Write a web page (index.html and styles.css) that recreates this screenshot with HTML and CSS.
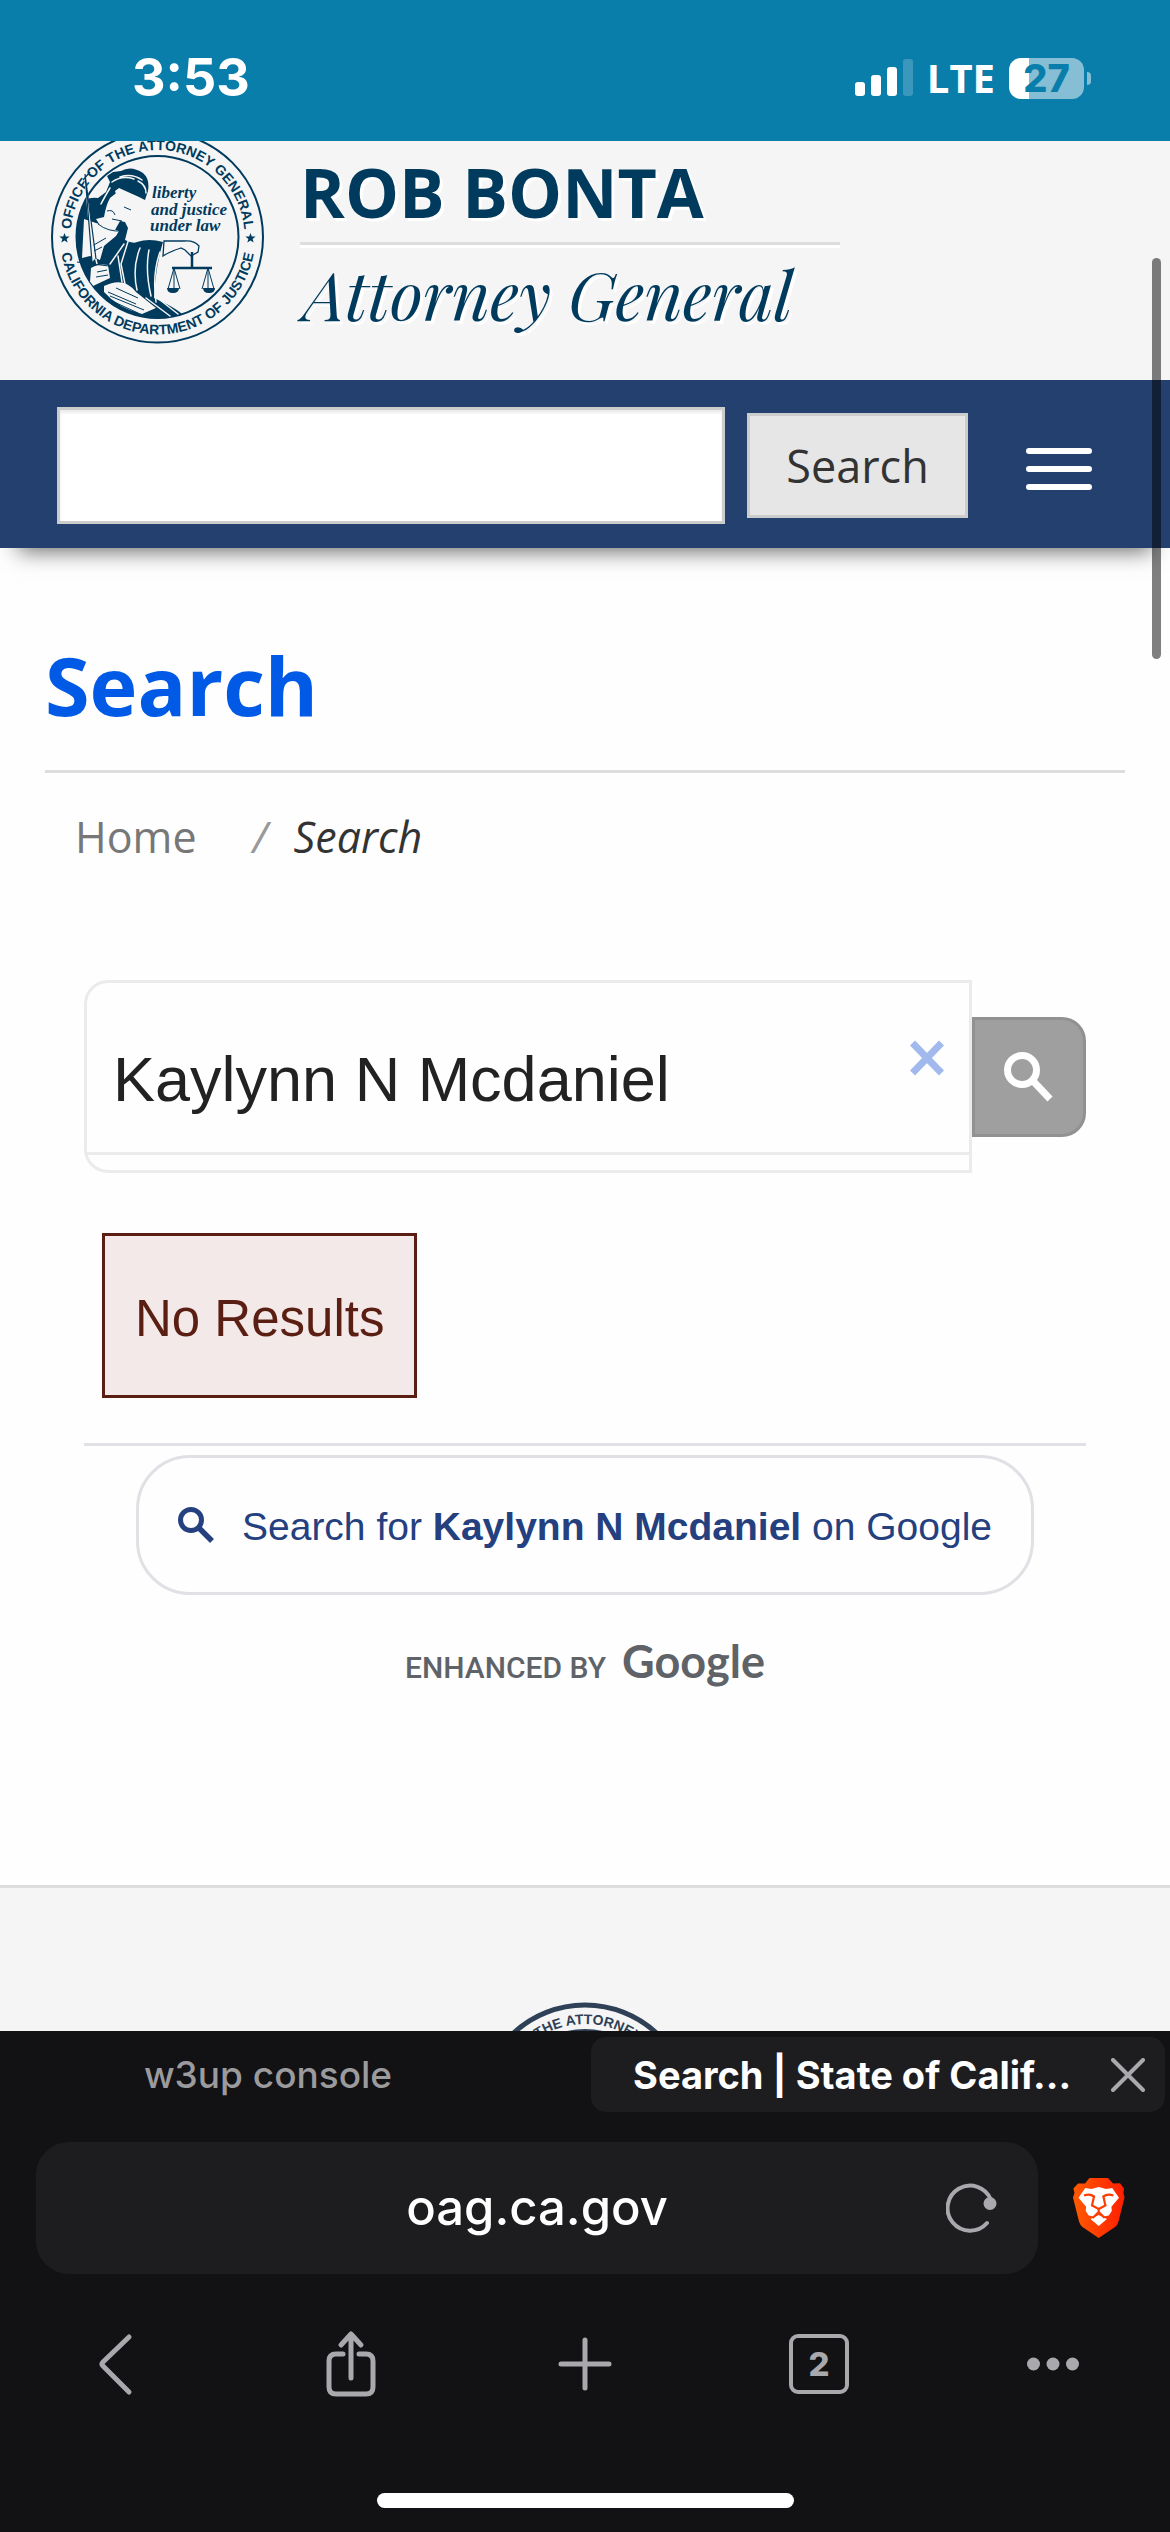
FILE: index.html
```html
<!DOCTYPE html>
<html lang="en">
<head>
<meta charset="utf-8">
<meta name="viewport" content="width=device-width, initial-scale=1">
<title>Search | State of California</title>
<link rel="stylesheet" href="styles.css">
</head>
<body>
<div class="screen">
  <div class="status">
    <span class="clock">3:53</span>
    <div class="status-right">
      <svg class="signal" width="58" height="38" viewBox="0 0 58 38" fill="#fff" aria-hidden="true">
        <rect x="0" y="23" width="10" height="14" rx="3"/>
        <rect x="16" y="16" width="10" height="21" rx="3"/>
        <rect x="32" y="8" width="10" height="29" rx="3"/>
        <rect x="48" y="0" width="10" height="37" rx="3" opacity=".2"/>
      </svg>
      <span class="carrier">LTE</span>
      <div class="battery"><span class="battery-level">27</span><span class="battery-tip"></span></div>
    </div>
  </div>

  <header class="banner">
    <svg class="seal" width="216" height="204" viewBox="50 141 216 204" role="img" aria-label="Office of the Attorney General seal">
      <defs>
        <path id="arcTop" d="M70.500 237 A87 87 0 0 1 244.500 237"/>
        <path id="arcBottom" d="M60 237 A97.500 97.500 0 0 0 255 237"/>
        <clipPath id="disc"><circle cx="157.500" cy="237" r="81"/></clipPath>
      </defs>
      <g fill="none" stroke="#003a5d">
        <circle cx="157.500" cy="237" r="105.500" stroke-width="2"/>
        <circle cx="157.500" cy="237" r="81" stroke-width="2"/>
      </g>
      <g class="seal-ring" fill="#003a5d" text-anchor="middle">
        <text><textPath href="#arcTop" startOffset="50%">OFFICE OF THE ATTORNEY GENERAL</textPath></text>
        <text><textPath href="#arcBottom" startOffset="50%">CALIFORNIA DEPARTMENT OF JUSTICE</textPath></text>
      </g>
      <g fill="#003a5d">
        <path id="star" d="M64.500 233l1.300 3.600h3.800l-3 2.300 1.100 3.700-3.200-2.200-3.200 2.200 1.100-3.700-3-2.300h3.800z"/>
        <use href="#star" x="186"/>
      </g>
      <g class="seal-motto" fill="#003a5d">
        <text x="152" y="198">liberty</text>
        <text x="151" y="215">and justice</text>
        <text x="150" y="231">under law</text>
      </g>
      <g clip-path="url(#disc)">
        <path fill="#003a5d" d="M78 206q8-10 20-8l8-6 4-10-3-6 6-4 8-1q10-6 22 2 7 6 5 18l-3 9-6-3-20-9-4 3 3 9 8 8 4 6-6 6 4 8-3 12q8 4 12 2 12-4 26 0-6 20-8 42l-1 14q22 10 28 16l6 10-50 6-60-30-24-50z"/>
        <path fill="#f5f5f5" d="M120 190l18 9 5 2-2 8-5 2-2 8-9 3-5-1-5 9-13-3q-4-4-6-8l8-2q2-12 6-19z"/>
        <path fill="#f5f5f5" d="M84 219l15 5 20 7-3 5-12 10-4 14-10-4-8 2zM91 268q8-5 17-3l2 13-17 8-3-4zM104 286q20-10 32 6l20 16-14 6q-24-6-38-22z"/>
        <g fill="none" stroke="#f5f5f5" stroke-width="1.500" stroke-linecap="round">
          <path d="M112 182q10-7 22-3M110 188q-6 10-9 16M138 181q8 4 8 12M120 177q12-4 22 3M131 232l-10 32 6 30M140 248q-8 20-3 42M149 250q-4 20 2 46M160 252q-8 22-4 50M124 244l-14 20M166 252q-8 26-8 40M118 256l4 26M160 300l18 14M146 298l24 18M101 234v18M89 230l8 34"/>
        </g>
        <g fill="none" stroke="#003a5d" stroke-width="1">
          <path d="M108 292l28 12M110 296l34 14M112 301l26 12M116 288l22 10M97 272l10-2M96 277l12-2M98 224q10 8 24 7M104 204q-8 6-3 12M107 211q6-2 8 4M124 207l7 3M112 219l10 2M92 246l14-8M94 251l8-4"/>
        </g>
      </g>
      <g fill="none" stroke="#003a5d">
        <path fill="#f5f5f5" stroke="none" d="M84 175l2-1 9 85-3 3z"/>
        <path stroke-width="1.200" d="M85 174l11 85M85 174l7 88M77 262l32 4M83 180l7-8"/>
        <path stroke-width="1.300" fill="#f5f5f5" d="M164 241h20q10-1 15 5l-1 6-7 4-6-6-4-2q-12 4-18 8z"/>
        <path stroke-width="2.500" d="M172 268h40M192 252v15"/>
        <path stroke-width="1" d="M174 268l-6 21M174 268l6 21M174 268v21M208 268l-6 21M208 268l6 21M208 268v21"/>
        <path stroke="none" fill="#003a5d" d="M167 288h12q0 5-6 5t-6-5zM203 288h12q0 5-6 5t-6-5z"/>
      </g>
    </svg>
    <div class="titles">
      <div class="ag-name">ROB BONTA</div>
      <div class="ag-role">Attorney General</div>
    </div>
  </header>

  <nav class="nav">
    <input class="nav-input" type="text" aria-label="Search this site">
    <button class="nav-search" type="button">Search</button>
    <button class="menu" type="button" aria-label="Menu"><span></span><span></span><span></span></button>
  </nav>

  <main class="main">
    <h1 class="title">Search</h1>
    <div class="crumbs">
      <a class="crumb" href="#">Home</a><span class="slash">/</span><em class="here">Search</em>
    </div>

    <section class="results">
      <form class="finder">
        <div class="finder-box">
          <div class="finder-row">
            <input class="finder-input" type="text" value="Kaylynn N Mcdaniel" aria-label="Search terms">
            <button class="clear" type="button" aria-label="Clear">
              <svg width="34" height="36" viewBox="0 0 34 36" stroke="#a1b9ed" stroke-width="7"><path d="M2.500 3l29 30M31.500 3l-29 30"/></svg>
            </button>
          </div>
        </div>
        <button class="go" type="button" aria-label="Search">
          <svg width="50" height="50" viewBox="0 0 50 50" fill="none" stroke="#fff"><circle cx="18" cy="18" r="14.500" stroke-width="7"/><path stroke-width="7" d="M30 30l16 17"/></svg>
        </button>
      </form>
      <div class="none">No Results</div>
      <div class="more">
        <a class="pill" href="#">
          <svg width="36" height="36" viewBox="0 0 36 36" fill="none" stroke="#24407f"><circle cx="13" cy="13" r="10.500" stroke-width="5"/><path stroke-width="5.500" d="M21 21l13 13"/></svg>
          <span class="pill-text">Search for <b>Kaylynn N Mcdaniel</b> on Google</span>
        </a>
        <div class="enhanced"><span>ENHANCED BY</span><span class="google">Google</span></div>
      </div>
    </section>
  </main>

  <footer class="footer">
    <svg class="foot-seal" width="216" height="29" viewBox="0 0 216 29" role="img" aria-label="Attorney General seal">
      <defs><path id="arcFoot" d="M22 108 A86 86 0 0 1 194 108"/></defs>
      <g fill="none" stroke="#2e4157">
        <circle cx="108" cy="108" r="105" stroke-width="5"/>
        <circle cx="108" cy="108" r="79" stroke-width="4"/>
      </g>
      <text class="seal-ring" fill="#2e4157" text-anchor="middle"><textPath href="#arcFoot" startOffset="50%">OFFICE OF THE ATTORNEY GENERAL</textPath></text>
    </svg>
  </footer>

  <div class="chrome">
    <div class="tabs">
      <button class="tab tab-off" type="button">w3up console</button>
      <div class="tab tab-on">
        <span class="tab-name">Search | State of Calif...</span>
        <button class="tab-close" type="button" aria-label="Close tab">
          <svg width="34" height="34" viewBox="0 0 34 34" stroke="#a9a8ad" stroke-width="4" stroke-linecap="round"><path d="M2 2l30 30M32 2L2 32"/></svg>
        </button>
      </div>
    </div>
    <div class="address">
      <div class="url">
        <span class="url-text">oag.ca.gov</span>
        <button class="icon-btn reload" type="button" aria-label="Reload">
          <svg width="52" height="50" viewBox="0 0 52 50" fill="none" stroke="#a9a8ad" stroke-width="4" stroke-linecap="round"><path d="M41 40A22.500 22.500 0 1 1 45 17"/><circle cx="44" cy="20.500" r="6.500" fill="#a9a8ad" stroke="none"/></svg>
        </button>
      </div>
      <button class="icon-btn" type="button" aria-label="Brave Shields">
        <svg width="52" height="60" viewBox="0 0 52 60">
          <defs><linearGradient id="brave"><stop offset="0" stop-color="#ff5a00"/><stop offset="1" stop-color="#ff1f00"/></linearGradient></defs>
          <path fill="url(#brave)" d="M16.400 0H35l5 5.500 7-.2 4 5.200-.6 4.500 1.100 4.500-6 24q-.8 3.500-3.500 5.500L25.700 60 9.500 49Q7 47 6 43.500L0 19.500 1.500 15 .4 10.500l4.600-5 7 0z"/>
          <path fill="#fff" d="M12.300 10l6 1 7.400-2 7.400 2 6.100-1L46 19.700l-7.600 9 .4 4.300-3 4.500-5 1-5.100-3.500-5 3.500-5-1-3-4.500.4-4.300L5.500 19.700zM17.500 41l8.200-4 8.300 4-8.300 7z"/>
          <path fill="none" stroke="#ff3c00" stroke-width="2.200" d="M11 17.500q6-2 10 1l-2 9 6.700 3.500 6.700-3.500-2-9q4-3 10-1M25.700 31v3l-6 6M25.700 34l6 6"/>
        </svg>
      </button>
    </div>
    <div class="tools">
      <button class="icon-btn" type="button" aria-label="Back"><svg width="68" height="68" viewBox="0 0 68 68"><path d="M46 7L20 32q-2 2 0 4l26 26"/></svg></button>
      <button class="icon-btn" type="button" aria-label="Share"><svg width="68" height="68" viewBox="0 0 68 68"><path d="M26 24h-7q-7 0-7 7v26q0 7 7 7h30q7 0 7-7V31q0-7-7-7h-7M34 48V5M24 15L34 4l10 11"/></svg></button>
      <button class="icon-btn" type="button" aria-label="New tab"><svg width="68" height="68" viewBox="0 0 68 68"><path d="M34 10v48M10 34h48"/></svg></button>
      <button class="icon-btn" type="button" aria-label="Tabs"><span class="count">2</span></button>
      <button class="icon-btn" type="button" aria-label="More"><svg class="dots" width="68" height="68" viewBox="0 0 68 68"><circle cx="14.500" cy="34" r="6.500"/><circle cx="34" cy="34" r="6.500"/><circle cx="53.500" cy="34" r="6.500"/></svg></button>
    </div>
    <div class="home-bar"></div>
  </div>
  <div class="scroll-thumb"></div>
</div>
</body>
</html>
```
FILE: styles.css
```css
* { box-sizing: border-box; }
body { margin: 0; background: #fff; font-family: "Open Sans", "Noto Sans", sans-serif; }
button { border: 0; padding: 0; background: none; font: inherit; color: inherit; }
svg { display: block; }
.screen { position: relative; display: flex; flex-direction: column; min-height: 100vh; background: #fefefe; }

.status { display: flex; justify-content: space-between; align-items: center; padding: 48px 86px 33px 132px; background: #0a7eab; color: #fff; font-family: Inter, sans-serif; }
.clock { font-size: 52px; line-height: 60px; font-weight: 700; }
.status-right { display: flex; align-items: center; gap: 14px; }
.carrier { font-family: "Open Sans", sans-serif; font-weight: 700; font-size: 40px; line-height: 60px; }
.battery { position: relative; width: 75px; height: 41px; border-radius: 12px; background: linear-gradient(90deg, #fff 20px, #85bed5 20px); }
.battery-level { display: block; text-align: center; font-size: 38px; line-height: 41px; font-weight: 800; color: #0a7eab; }
.battery-tip { position: absolute; right: -7px; top: 14px; width: 4px; height: 13px; border-radius: 0 6px 6px 0; background: #85bed5; }

.banner { display: flex; gap: 34px; padding: 0 48px 35px 50px; background: #f5f5f5; color: #003a5d; }
.seal { flex: none; }
.seal-ring { font: 700 14px "Liberation Sans", sans-serif; }
.seal-motto { font: italic 700 17px "Liberation Serif", serif; }
.titles { width: 540px; text-shadow: 3px 3px 0 #fff; }
.ag-name { padding: 6px 0; font-size: 68px; line-height: 89px; font-weight: 700; border-bottom: 3px solid #ddd; box-shadow: 0 3px 0 #fff; }
.ag-role { padding: 9px 3px; font: italic 67px/80px "Playfair Display", "Liberation Serif", serif; white-space: nowrap; }

.nav { position: relative; display: flex; align-items: center; padding: 27px 78px 24px 57px; background: #24406e; box-shadow: 0 21px 21px -18px rgba(0, 0, 0, .6); }
.nav-input { flex: 1; min-width: 0; height: 117px; padding: 0 20px; border: 3px solid #ccc; border-radius: 0; background: #fff; font: 45px "Open Sans", sans-serif; box-shadow: inset 0 3px 3px rgba(0, 0, 0, .08); }
.nav-search { width: 221px; height: 105px; margin-left: 22px; border: 3px solid #ccc; background: #e6e6e6; color: #333; font-size: 45px; }
.menu { display: flex; flex-direction: column; gap: 12px; margin: 6px 0 0 58px; }
.menu span { width: 66px; height: 6px; border-radius: 3px; background: #fff; }

.main { padding: 82px 45px 0; }
.title { margin: 0; padding-bottom: 30px; border-bottom: 3px solid #ddd; color: #005ae6; font-size: 81px; line-height: 110px; font-weight: 700; }
.crumbs { display: flex; padding: 34px 30px 0; font-size: 43px; line-height: 60px; }
.crumb { color: #777; text-decoration: none; }
.slash { margin: 0 26px 0 56px; color: #999; font-style: italic; }
.here { color: #333; }

.results { padding: 113px 39px 0; font-family: "Liberation Sans", sans-serif; }
.finder { display: flex; align-items: center; }
.finder-box { flex: 1; min-width: 0; padding-bottom: 15px; border: 3px solid #ebebeb; border-radius: 24px 0 0 24px; }
.finder-row { display: flex; border-bottom: 3px solid #ebebeb; }
.finder-input { flex: 1; min-width: 0; height: 169px; padding: 22px 0 0 26px; border: 0; background: none; color: #222; font: 63px "Liberation Sans", sans-serif; }
.clear { display: grid; place-content: center; width: 84px; height: 149px; }
.go { display: grid; place-content: center; width: 114px; height: 120px; border: 3px solid #919191; border-radius: 0 24px 24px 0; background: #9f9f9f; }
.none { width: fit-content; margin: 60px 18px 45px; padding: 54px 30px 48px; border: 3px solid #5a1f12; background: #f2e9e8; color: #5a1f12; font-size: 51px; line-height: 57px; }
.more { display: flex; flex-direction: column; align-items: center; padding-top: 9px; border-top: 3px solid #e0e0e5; }
.pill { display: flex; align-items: center; gap: 28px; height: 140px; padding: 0 39px; border: 3px solid #e0e0e5; border-radius: 54px; color: #24407f; font-size: 39px; text-decoration: none; white-space: nowrap; }
.pill-text { padding-top: 4px; }
.enhanced { display: flex; align-items: baseline; gap: 16px; padding: 36px 0 187px; color: #5f6368; font: 500 30px/60px Roboto, sans-serif; }
.google { font: 700 45px/60px Lato, sans-serif; }

.footer { flex: 1; display: flex; flex-direction: column; align-items: center; justify-content: flex-end; min-height: 145px; border-top: 3px solid #ddd; background: #f5f5f5; }

.chrome { background: #121214; color: #fff; font-family: Inter, sans-serif; }
.tabs { display: grid; grid-template-columns: 1fr 1fr; gap: 12px; padding: 6px 5px 0; }
.tab { display: flex; align-items: center; height: 75px; border-radius: 15px; color: #9b9b9e; font-size: 37px; font-weight: 500; }
.tab-off { justify-content: center; padding-right: 48px; }
.tab-on { justify-content: space-between; padding: 0 20px 0 42px; background: #1d1d1f; color: #fff; font-size: 38px; font-weight: 700; white-space: nowrap; }
.address { display: flex; align-items: center; gap: 35px; padding: 30px 45px 0 36px; }
.url { flex: 1; display: grid; grid-template-columns: 92px 1fr 92px; align-items: center; height: 132px; border-radius: 33px; background: #1d1d1f; }
.url-text { grid-column: 2; text-align: center; font-size: 49px; line-height: 60px; font-weight: 500; }
.icon-btn { display: grid; place-content: center; }
.reload { justify-content: start; }
.tools { display: grid; grid-template-columns: repeat(5, 1fr); padding: 56px 0 95px; }
.tools svg { fill: none; stroke: #a9a8ad; stroke-width: 5; stroke-linecap: round; stroke-linejoin: round; }
.tools .dots { fill: #a9a8ad; stroke: none; }
.count { width: 60px; height: 60px; border: 4px solid #a9a8ad; border-radius: 9px; color: #a9a8ad; font-size: 33px; line-height: 52px; font-weight: 800; }
.home-bar { width: 417px; height: 15px; margin: 0 auto 24px; border-radius: 8px; background: #fff; }
.scroll-thumb { position: absolute; right: 9px; top: 258px; width: 9px; height: 401px; border-radius: 5px; background: rgba(0, 0, 0, .5); }
```
